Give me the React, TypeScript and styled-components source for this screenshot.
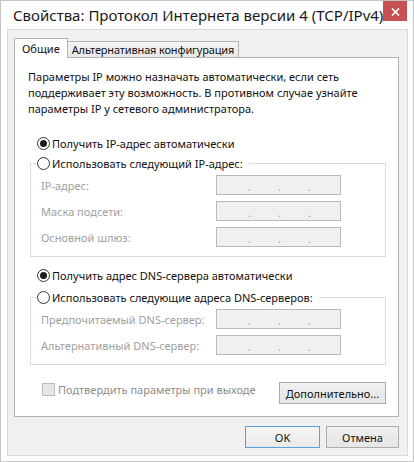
import React from 'react';
import styled, { createGlobalStyle } from 'styled-components';

const GlobalStyle = createGlobalStyle`
  html, body {
    margin: 0;
    padding: 0;
    background: #ffffff;
  }
  * {
    box-sizing: border-box;
  }
`;

const FONT = `"Noto Sans", "Open Sans", "Liberation Sans", sans-serif`;

const Window = styled.div`
  width: 414px;
  height: 462px;
  background: #ffffff;
  border: 1px solid #c4c4c4;
  display: flex;
  flex-direction: column;
  font-family: ${FONT};
  font-size: 11px;
  color: #111;
`;

const TitleBar = styled.div`
  height: 28px;
  display: flex;
  align-items: flex-start;
  justify-content: space-between;
  padding-left: 12px;
`;

const Title = styled.div`
  font-size: 15px;
  line-height: 28px;
  color: #1a1a1a;
  white-space: nowrap;
`;

const CloseButton = styled.div`
  width: 31px;
  height: 20px;
  margin-right: 6px;
  background: #c75050;
  display: flex;
  align-items: center;
  justify-content: center;
  padding-top: 2px;
`;

const Body = styled.div`
  flex: 1;
  margin: 0 5px 5px 6px;
  border: 1px solid #dadada;
  background: #f0f0f0;
  padding: 8px 8px 0 6px;
  display: flex;
  flex-direction: column;
`;

const TabRow = styled.div`
  display: flex;
  align-items: flex-end;
  height: 19px;
`;

const Tab = styled.div<{ $active?: boolean }>`
  position: relative;
  z-index: ${p => (p.$active ? 1 : 0)};
  height: ${p => (p.$active ? '20px' : '16px')};
  margin-bottom: ${p => (p.$active ? '-1px' : '0')};
  padding: ${p => (p.$active ? '0 7px 1px' : '0 4px')};
  border: 1px solid #b4b4b4;
  border-bottom: none;
  border-left: ${p => (p.$active ? '1px solid #b4b4b4' : 'none')};
  background: ${p => (p.$active ? '#ffffff' : 'linear-gradient(#f4f4f4, #e8e8e8)')};
  display: flex;
  align-items: center;
  white-space: nowrap;
  letter-spacing: ${p => (p.$active ? '0' : '-0.15px')};
`;

const Panel = styled.div`
  height: 360px;
  border: 1px solid #b4b4b4;
  background: #ffffff;
  padding: 0 12px 0 0;
  display: flex;
  flex-direction: column;
`;

const Intro = styled.p`
  margin: 11px 0 0 13px;
  line-height: 16px;
`;

const RadioRow = styled.label<{ $top: number }>`
  display: flex;
  align-items: center;
  gap: 2px;
  height: 16px;
  margin: ${p => p.$top}px 0 0 22px;
  white-space: nowrap;
`;

const RadioCircle = styled.span<{ $checked?: boolean }>`
  width: 13px;
  height: 13px;
  flex: none;
  border-radius: 50%;
  border: 1px solid #333333;
  background: #ffffff;
  display: flex;
  align-items: center;
  justify-content: center;

  &::after {
    content: '';
    width: 7px;
    height: 7px;
    border-radius: 50%;
    background: #1c1c1c;
    display: ${p => (p.$checked ? 'block' : 'none')};
  }
`;

const Group = styled.fieldset<{ $top: number }>`
  margin: ${p => p.$top}px 0 0 15px;
  padding: 4px 0 9px 5px;
  border: 1px solid #dcdcdc;
  min-width: 0;
  display: flex;
  flex-direction: column;
  gap: 6px;
`;

const Legend = styled.legend`
  padding: 0 6px 0 1px;
  height: 16px;
  display: flex;
  align-items: center;
  gap: 2px;
  white-space: nowrap;
`;

const FieldRow = styled.div`
  display: flex;
  align-items: center;
  height: 20px;
  margin-left: 5px;
`;

const FieldLabel = styled.span`
  width: 175px;
  color: #a0a0a0;
  white-space: nowrap;
`;

const AddressBox = styled.div`
  width: 125px;
  height: 20px;
  border: 1px solid #b9b9b9;
  background: #f0f0f0;
  display: flex;
  padding-left: 31px;
  color: #9a9a9a;
  line-height: 22px;
  font-size: 11px;
`;

const Dot = styled.span`
  width: 30px;
`;

const PanelFooter = styled.div`
  display: flex;
  align-items: flex-start;
  justify-content: space-between;
  margin-top: 17px;
  padding-left: 27px;
`;

const CheckRow = styled.label`
  display: flex;
  align-items: center;
  gap: 3px;
  color: #8c8c8c;
  margin-top: -1px;
  height: 16px;
  white-space: nowrap;
`;

const CheckBox = styled.span`
  width: 13px;
  height: 13px;
  border: 1px solid #bcbcbc;
  background: #e6e6e6;
  flex: none;
`;

const Button = styled.div<{ $width: number; $default?: boolean }>`
  width: ${p => p.$width}px;
  height: 22px;
  border: 1px solid ${p => (p.$default ? '#5a9fdc' : '#acacac')};
  background: ${p => (p.$default ? 'linear-gradient(#f6f6f6, #eaeaea)' : 'linear-gradient(#f0f0f0, #e5e5e5)')};
  display: flex;
  align-items: center;
  justify-content: center;
  white-space: nowrap;
`;

const DialogFooter = styled.div`
  display: flex;
  justify-content: flex-end;
  gap: 6px;
  margin-top: 9px;
`;

const AddressField = ({ label }: { label: string }) => (
  <FieldRow>
    <FieldLabel>{label}</FieldLabel>
    <AddressBox>
      <Dot>.</Dot>
      <Dot>.</Dot>
      <Dot>.</Dot>
    </AddressBox>
  </FieldRow>
);

const App = () => (
  <>
    <GlobalStyle />
    <Window>
      <TitleBar>
        <Title>Свойства: Протокол Интернета версии 4 (TCP/IPv4)</Title>
        <CloseButton>
          <svg width="9" height="8" viewBox="0 0 9 8">
            <path d="M1 0.5 L8 7.5 M8 0.5 L1 7.5" stroke="#ffffff" strokeWidth="1.6" />
          </svg>
        </CloseButton>
      </TitleBar>
      <Body>
        <TabRow>
          <Tab $active>Общие</Tab>
          <Tab>Альтернативная конфигурация</Tab>
        </TabRow>
        <Panel>
          <Intro>
            Параметры IP можно назначать автоматически, если сеть
            <br />
            поддерживает эту возможность. В противном случае узнайте
            <br />
            параметры IP у сетевого администратора.
          </Intro>
          <RadioRow $top={18}>
            <RadioCircle $checked />
            Получить IP-адрес автоматически
          </RadioRow>
          <Group $top={4}>
            <Legend>
              <RadioCircle />
              Использовать следующий IP-адрес:
            </Legend>
            <AddressField label="IP-адрес:" />
            <AddressField label="Маска подсети:" />
            <AddressField label="Основной шлюз:" />
          </Group>
          <RadioRow $top={10}>
            <RadioCircle $checked />
            Получить адрес DNS-сервера автоматически
          </RadioRow>
          <Group $top={6}>
            <Legend>
              <RadioCircle />
              Использовать следующие адреса DNS-серверов:
            </Legend>
            <AddressField label="Предпочитаемый DNS-сервер:" />
            <AddressField label="Альтернативный DNS-сервер:" />
          </Group>
          <PanelFooter>
            <CheckRow>
              <CheckBox />
              Подтвердить параметры при выходе
            </CheckRow>
            <Button $width={107}>Дополнительно...</Button>
          </PanelFooter>
        </Panel>
        <DialogFooter>
          <Button $width={75} $default>
            OK
          </Button>
          <Button $width={73}>Отмена</Button>
        </DialogFooter>
      </Body>
    </Window>
  </>
);

export default App;
